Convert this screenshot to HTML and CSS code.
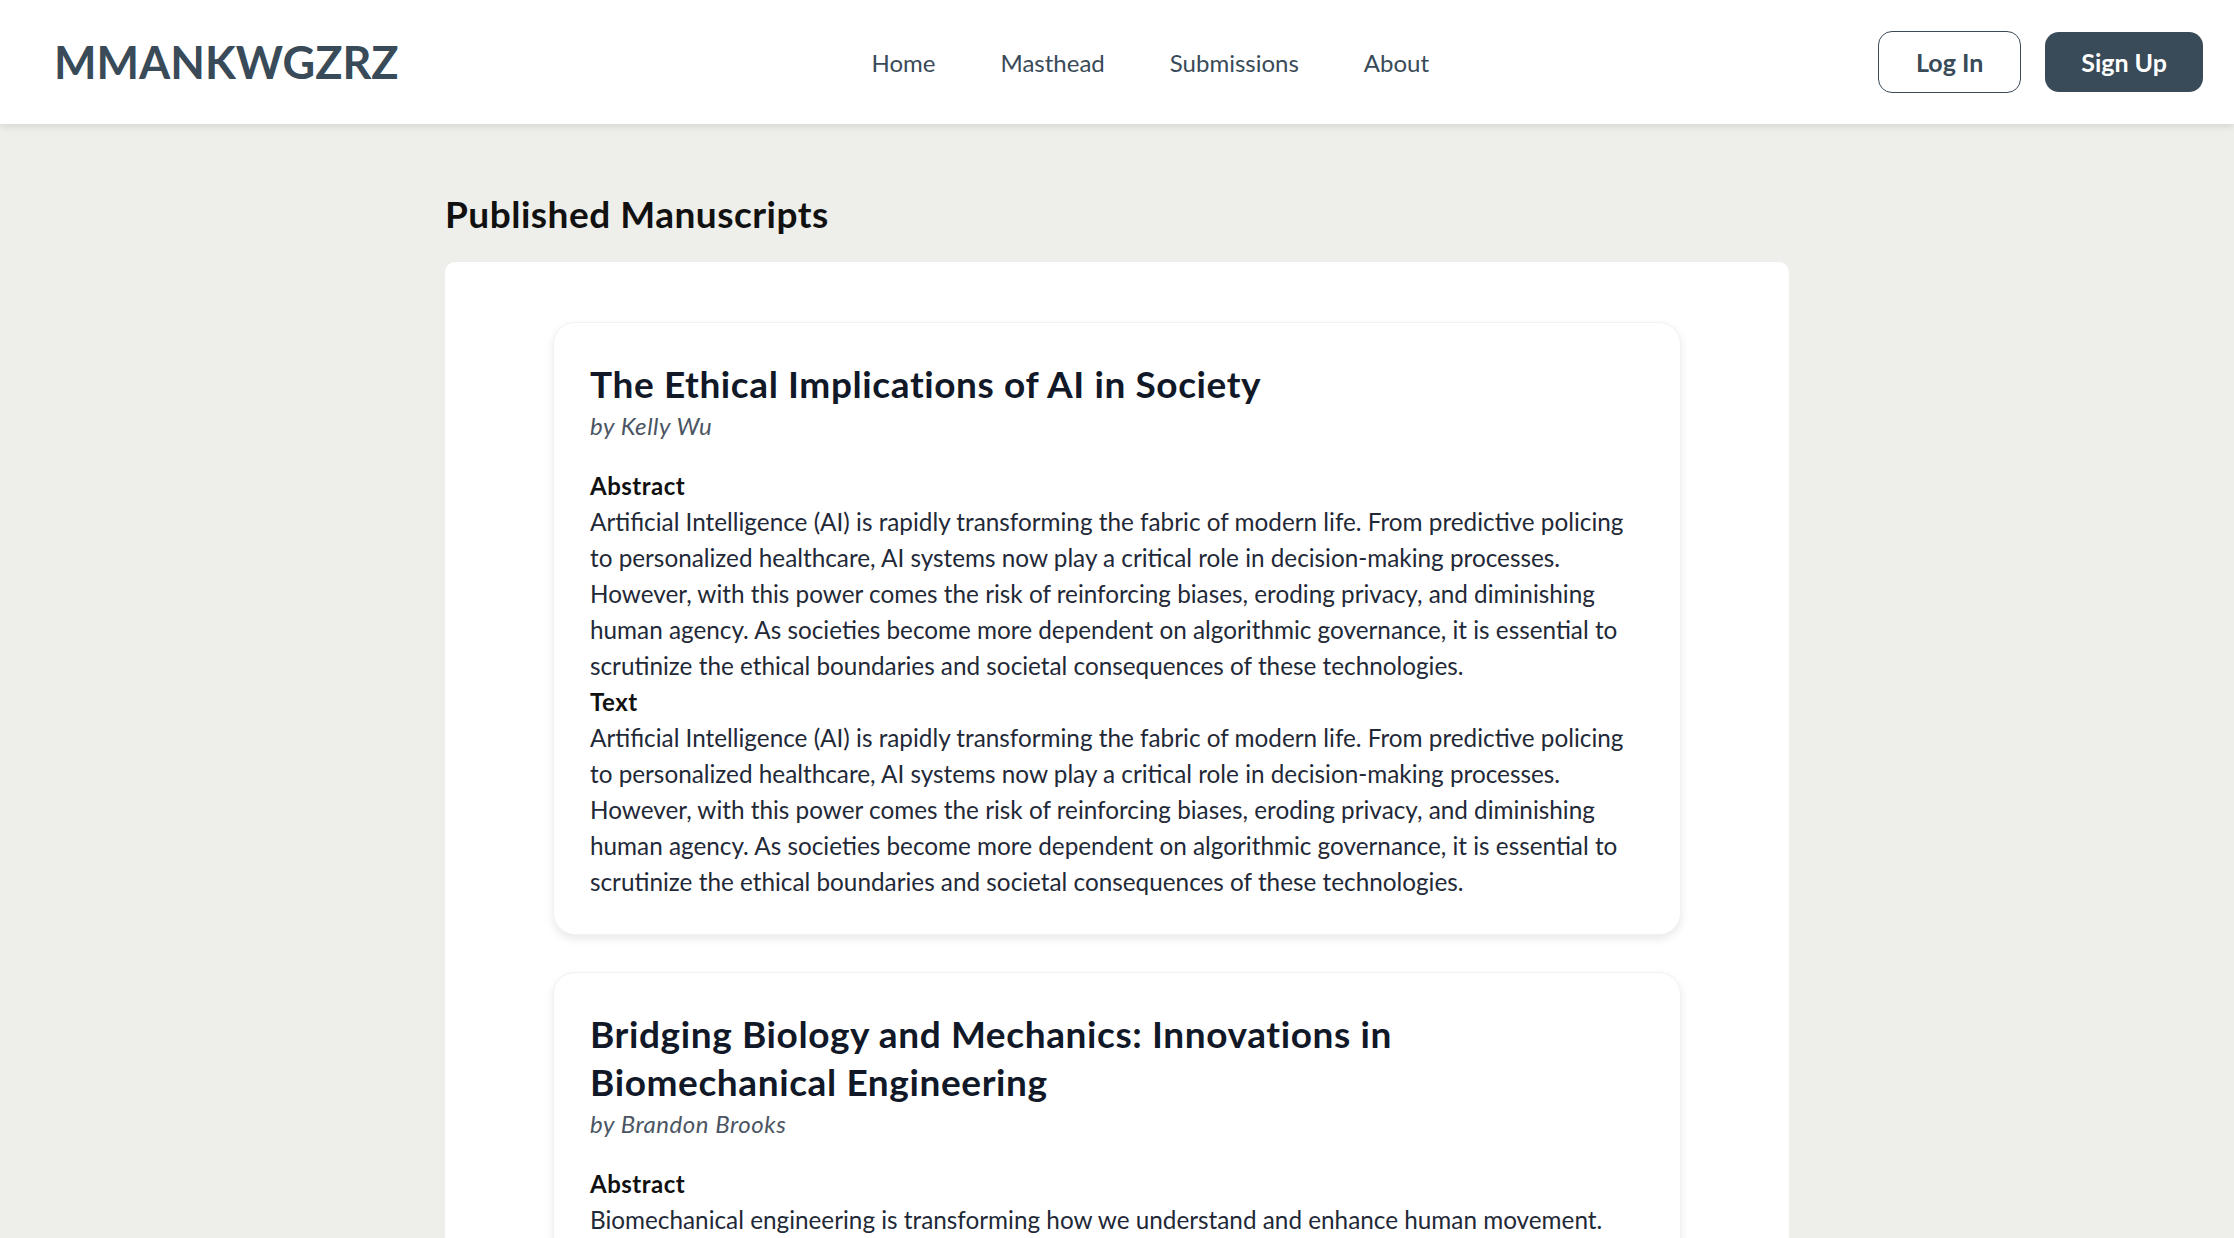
FILE: index.html
```html
<!DOCTYPE html>
<html lang="en">
<head>
<meta charset="utf-8">
<title>MMANKWGZRZ — Published Manuscripts</title>
<link rel="stylesheet" href="styles.css">
</head>
<body>
<header class="site-header">
  <div class="logo">MMANKWGZRZ</div>
  <nav class="nav">
    <a href="#" class="nav-link">Home</a>
    <a href="#" class="nav-link">Masthead</a>
    <a href="#" class="nav-link">Submissions</a>
    <a href="#" class="nav-link">About</a>
  </nav>
  <div class="auth">
    <a href="#" class="btn btn-outline">Log In</a>
    <a href="#" class="btn btn-solid">Sign Up</a>
  </div>
</header>

<main class="main">
  <h2 class="page-title">Published Manuscripts</h2>
  <section class="panel">
    <article class="card">
      <h3 class="card-title">The Ethical Implications of AI in Society</h3>
      <p class="byline">by Kelly Wu</p>
      <div class="section">
        <div class="label">Abstract</div>
        <p class="body">Artificial Intelligence (AI) is rapidly transforming the fabric of modern life. From predictive policing to personalized healthcare, AI systems now play a critical role in decision-making processes. However, with this power comes the risk of reinforcing biases, eroding privacy, and diminishing human agency. As societies become more dependent on algorithmic governance, it is essential to scrutinize the ethical boundaries and societal consequences of these technologies.</p>
        <div class="label">Text</div>
        <p class="body">Artificial Intelligence (AI) is rapidly transforming the fabric of modern life. From predictive policing to personalized healthcare, AI systems now play a critical role in decision-making processes. However, with this power comes the risk of reinforcing biases, eroding privacy, and diminishing human agency. As societies become more dependent on algorithmic governance, it is essential to scrutinize the ethical boundaries and societal consequences of these technologies.</p>
      </div>
    </article>
    <article class="card">
      <h3 class="card-title">Bridging Biology and Mechanics: Innovations in Biomechanical Engineering</h3>
      <p class="byline">by Brandon Brooks</p>
      <div class="section">
        <div class="label">Abstract</div>
        <p class="body">Biomechanical engineering is transforming how we understand and enhance human movement. Through the integration of mechanics and biology, researchers are designing prosthetics, implants, and assistive devices that restore function and improve quality of life.</p>
        <div class="label">Text</div>
        <p class="body">Biomechanical engineering is transforming how we understand and enhance human movement. Through the integration of mechanics and biology, researchers are designing prosthetics, implants, and assistive devices that restore function and improve quality of life.</p>
      </div>
    </article>
  </section>
</main>
</body>
</html>
```

FILE: styles.css
```css
* { box-sizing: border-box; }

html, body {
  margin: 0;
  padding: 0;
}

body {
  background: #eeeeea;
  font-family: Lato, "Open Sans", "Liberation Sans", sans-serif;
  color: #1f2937;
}

.site-header {
  height: 124px;
  background: #ffffff;
  display: flex;
  align-items: center;
  justify-content: space-between;
  padding: 0 31px 0 54px;
  box-shadow: 0 2px 8px rgba(0, 0, 0, 0.12);
  position: relative;
  z-index: 1;
}

.logo {
  font-size: 45px;
  font-weight: 700;
  color: #394a58;
  line-height: 1;
}

.nav {
  display: flex;
  gap: 65px;
  margin-left: 24px;
}

.nav-link {
  font-size: 24px;
  color: #394a58;
  text-decoration: none;
}

.auth {
  display: flex;
  gap: 24px;
  align-items: center;
}

.btn {
  display: inline-block;
  font-size: 25px;
  font-weight: 700;
  line-height: 36px;
  text-decoration: none;
  border-radius: 14px;
}

.btn-outline {
  border: 1px solid #394a58;
  color: #394a58;
  padding: 12px 37px;
  background: #fff;
}

.btn-solid {
  background: #394a58;
  color: #ffffff;
  padding: 12px 36px;
}

.main {
  max-width: 1344px;
  margin: 0 auto;
  padding: 66px 0 40px;
}

.page-title {
  margin: 0 0 24px;
  font-size: 37px;
  line-height: 48px;
  letter-spacing: 0.5px;
  font-weight: 700;
  color: #111111;
}

.panel {
  background: #ffffff;
  border-radius: 10px;
  padding: 60px 108px;
  display: flex;
  flex-direction: column;
  gap: 37px;
}

.card {
  background: #ffffff;
  border: 1px solid #f2f2f2;
  border-radius: 22px;
  padding: 37px 36px 34px;
  box-shadow: 0 4px 10px rgba(0, 0, 0, 0.09);
}

.card-title {
  margin: 0;
  font-size: 37px;
  line-height: 48px;
  letter-spacing: 0.6px;
  font-weight: 700;
  color: #111827;
}

.byline {
  margin: 0 0 24px;
  font-size: 24px;
  line-height: 36px;
  letter-spacing: 0.55px;
  font-style: italic;
  color: #4b5563;
}

.label {
  font-size: 24px;
  line-height: 36px;
  letter-spacing: 0.5px;
  font-weight: 700;
  color: #111111;
}

.body {
  margin: 0;
  font-size: 24.3px;
  line-height: 36px;
  color: #1f2937;
}
```
